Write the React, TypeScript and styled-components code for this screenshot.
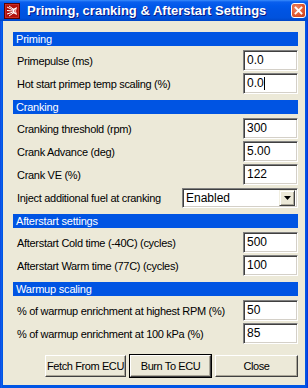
import React from 'react';
import styled, { createGlobalStyle } from 'styled-components';

const Global = createGlobalStyle`
  html, body { margin: 0; padding: 0; background: #ECE9D8; }
  body { width: 308px; height: 388px; overflow: hidden; }
  * { box-sizing: border-box; }
`;

const Window = styled.div`
  width: 308px;
  height: 388px;
  display: flex;
  flex-direction: column;
  background: linear-gradient(to right, #0831D9 0, #166AEE 1px, #0055E5 2px, #0055E5 calc(100% - 2px), #0831D9 100%);
  font-family: "Liberation Sans", Arial, sans-serif;
  color: #000;
`;

const TitleBar = styled.div`
  height: 21px;
  flex: none;
  display: flex;
  align-items: center;
  padding: 0 2px 0 4px;
  background: linear-gradient(to bottom, #3A8CFB 0, #0A5FEE 2px, #0058EA 6px, #0054E3 50%, #0052DD 85%, #0046C6 100%);
`;

const TitleIcon = styled.svg`
  width: 16px;
  height: 16px;
  flex: none;
  margin-right: 7px;
`;

const TitleText = styled.div`
  flex: 1;
  color: #fff;
  font-weight: bold;
  font-size: 13px;
  line-height: 21px;
  white-space: nowrap;
  text-shadow: 1px 1px #0A1883;
`;

const CloseBtn = styled.div`
  width: 15px;
  height: 15px;
  flex: none;
  border: 1px solid #fff;
  border-radius: 3px;
  background: radial-gradient(circle at 35% 35%, #F08A6C 0, #E2582F 55%, #C13A18 100%);
  display: flex;
  align-items: center;
  justify-content: center;
`;

const Body = styled.div`
  flex: 1;
  margin: 0 3px 3px 3px;
  background: #ECE9D8;
  padding: 11px 7px 0 10px;
  display: flex;
  flex-direction: column;
`;

const SectionHeader = styled.div`
  height: 14px;
  background: #0054E3;
  color: #fff;
  font-size: 11px;
  line-height: 14px;
  padding-left: 3px;
  letter-spacing: -0.2px;
`;

const Rows = styled.div`
  display: flex;
  flex-direction: column;
  gap: 2px;
  margin: 4px 0 6px 0;
`;

const Row = styled.div`
  height: 21px;
  display: flex;
  align-items: center;
  justify-content: space-between;
  padding-left: 4px;
`;

const Label = styled.span`
  font-size: 11px;
  letter-spacing: -0.3px;
  white-space: nowrap;
`;

const sunken = `
  border-top: 1px solid #808080;
  border-left: 1px solid #808080;
  border-right: 1px solid #fff;
  border-bottom: 1px solid #fff;
  box-shadow: inset 1px 1px 0 #404040, inset -1px -1px 0 #D4D0C8;
`;

const Field = styled.div`
  width: 55px;
  height: 21px;
  background: #fff;
  ${sunken}
  font-size: 12px;
  line-height: 19px;
  padding-left: 3px;
  display: flex;
  align-items: center;
  white-space: nowrap;
`;

const Caret = styled.span`
  display: inline-block;
  width: 1px;
  height: 13px;
  background: #000;
`;

const Select = styled.div`
  width: 116px;
  height: 20px;
  background: #fff;
  ${sunken}
  display: flex;
  align-items: center;
  padding: 2px;
  font-size: 12px;
`;

const SelectText = styled.span`
  flex: 1;
  padding-left: 1px;
`;

const ArrowBtn = styled.div`
  width: 16px;
  height: 16px;
  background: #ECE9D8;
  border-top: 1px solid #F1EFE2;
  border-left: 1px solid #F1EFE2;
  border-right: 1px solid #404040;
  border-bottom: 1px solid #404040;
  box-shadow: inset 1px 1px 0 #fff, inset -1px -1px 0 #ACA899;
  display: flex;
  align-items: center;
  justify-content: center;
`;

const ButtonBar = styled.div`
  display: flex;
  justify-content: flex-end;
  gap: 4px;
  margin-top: 5px;
`;

const Button = styled.div<{ $w: number; $default?: boolean }>`
  width: ${p => p.$w}px;
  height: 22px;
  flex: none;
  background: #ECE9D8;
  font-size: 11px;
  letter-spacing: -0.4px;
  white-space: nowrap;
  display: flex;
  align-items: center;
  justify-content: center;
  border-top: 1px solid #fff;
  border-left: 1px solid #fff;
  border-right: 1px solid #404040;
  border-bottom: 1px solid #404040;
  box-shadow: inset -1px -1px 0 #ACA899;
  ${p => p.$default ? `
    outline: 1px solid #000;
    outline-offset: 0;
  ` : ''}
`;

type Item = { label: string; value?: string; caret?: boolean; select?: string };

const sections: { title: string; items: Item[] }[] = [
  {
    title: 'Priming',
    items: [
      { label: 'Primepulse (ms)', value: '0.0' },
      { label: 'Hot start primep temp scaling (%)', value: '0.0', caret: true },
    ],
  },
  {
    title: 'Cranking',
    items: [
      { label: 'Cranking threshold (rpm)', value: '300' },
      { label: 'Crank Advance (deg)', value: '5.00' },
      { label: 'Crank VE (%)', value: '122' },
      { label: 'Inject additional fuel at cranking', select: 'Enabled' },
    ],
  },
  {
    title: 'Afterstart settings',
    items: [
      { label: 'Afterstart Cold time (-40C) (cycles)', value: '500' },
      { label: 'Afterstart Warm time (77C) (cycles)', value: '100' },
    ],
  },
  {
    title: 'Warmup scaling',
    items: [
      { label: '% of warmup enrichment at highest RPM (%)', value: '50' },
      { label: '% of warmup enrichment at 100 kPa (%)', value: '85' },
    ],
  },
];

export default function App() {
  return (
    <>
      <Global />
      <Window>
        <TitleBar>
          <TitleIcon viewBox="0 0 16 16">
            <rect x="0.5" y="0.5" width="15" height="15" fill="#B3120E" stroke="#5C0000" />
            <rect x="1.5" y="1.5" width="13" height="13" fill="none" stroke="#D8403A" strokeWidth="0.6" />
            <path d="M3 4 L9 7 M3 7.5 L9 8 M3 11 L9 9 M5 3 L10 6.5 M5 13 L10 9.5" stroke="#fff" strokeWidth="1" />
            <path d="M9 6 L13 4 L12 8 L13 12 L9 10 Z" fill="#fff" />
            <path d="M10 7 L12 6 L11.5 8 L12 10 L10 9 Z" fill="#E98080" />
          </TitleIcon>
          <TitleText>Priming, cranking &amp; Afterstart Settings</TitleText>
          <CloseBtn>
            <svg width="9" height="9" viewBox="0 0 9 9">
              <path d="M1.5 1.5 L7.5 7.5 M7.5 1.5 L1.5 7.5" stroke="#fff" strokeWidth="1.8" strokeLinecap="square" />
            </svg>
          </CloseBtn>
        </TitleBar>
        <Body>
          {sections.map(s => (
            <React.Fragment key={s.title}>
              <SectionHeader>{s.title}</SectionHeader>
              <Rows>
                {s.items.map(it => (
                  <Row key={it.label}>
                    <Label>{it.label}</Label>
                    {it.select ? (
                      <Select>
                        <SelectText>{it.select}</SelectText>
                        <ArrowBtn>
                          <svg width="7" height="4" viewBox="0 0 7 4">
                            <path d="M0 0 H7 L3.5 4 Z" fill="#000" />
                          </svg>
                        </ArrowBtn>
                      </Select>
                    ) : (
                      <Field>
                        {it.value}
                        {it.caret && <Caret />}
                      </Field>
                    )}
                  </Row>
                ))}
              </Rows>
            </React.Fragment>
          ))}
          <ButtonBar>
            <Button $w={81}>Fetch From ECU</Button>
            <Button $w={81} $default>Burn To ECU</Button>
            <Button $w={83}>Close</Button>
          </ButtonBar>
        </Body>
      </Window>
    </>
  );
}
